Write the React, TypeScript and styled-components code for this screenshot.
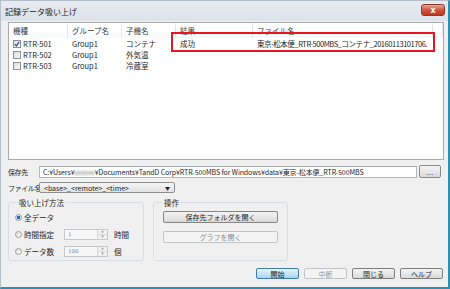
import React from 'react'
import styled, { createGlobalStyle } from 'styled-components'

const GlobalStyle = createGlobalStyle`
  html, body {
    margin: 0;
    padding: 0;
    background: #f0f0f0;
  }
  body {
    font-family: "Noto Sans CJK JP", "Noto Sans", sans-serif;
    font-size: 7.5px;
    color: #1e1e1e;
  }
`

const Window = styled.div`
  width: 450px;
  height: 289px;
  box-sizing: border-box;
  display: flex;
  flex-direction: column;
  background: #f0f0f0;
  border-left: 1px solid #b4bec8;
  border-top: 1px solid #b4bec8;
  border-right: 2px solid #2a8fb3;
  border-bottom: 2px solid #2a8fb3;
  overflow: hidden;
`

const TitleBar = styled.div`
  height: 20px;
  flex: none;
  display: flex;
  align-items: center;
  padding-left: 4px;
  background: linear-gradient(#e6ebf0, #dce3ea);
  font-size: 8px;
  color: #1a1a1a;
`

const CloseButton = styled.div`
  margin-left: auto;
  margin-right: 3px;
  margin-top: -2px;
  width: 24px;
  height: 12px;
  border: 1px solid #8b3a2e;
  border-radius: 3px;
  box-sizing: border-box;
  background: linear-gradient(#e9a99a, #d0533c 50%, #c2361e);
  display: flex;
  align-items: center;
  justify-content: center;
  color: #fff;
  font-family: "DejaVu Sans", sans-serif;
  font-size: 8px;
  font-weight: bold;
`

const Body = styled.div`
  flex: 1;
  display: flex;
  flex-direction: column;
  padding: 1px 4px 0 7px;
`

const ListBox = styled.div`
  position: relative;
  height: 138px;
  box-sizing: border-box;
  border: 1px solid #a9a9a9;
  background: #fff;
`

const HeaderRow = styled.div`
  display: flex;
  height: 15px;
`

const HeaderCell = styled.div<{ $w?: number }>`
  ${(p) => (p.$w ? `width: ${p.$w}px;` : 'flex: 1;')}
  flex-shrink: 0;
  box-sizing: border-box;
  border-right: 1px solid #e3e6ea;
  padding-left: 4px;
  display: flex;
  align-items: center;
  color: #3b3b3b;
  background: linear-gradient(#ffffff, #fafbfc);
`

const Row = styled.div`
  display: flex;
  height: 11px;
`

const Cell = styled.div<{ $w: number; $tight?: boolean }>`
  width: ${(p) => p.$w}px;
  flex-shrink: 0;
  box-sizing: border-box;
  padding-left: 4px;
  display: flex;
  align-items: center;
  gap: 2px;
  white-space: nowrap;
  overflow: hidden;
  letter-spacing: ${(p) => (p.$tight ? '-0.45px' : '0')};
`

const CheckBox = styled.span`
  width: 8px;
  height: 8px;
  box-sizing: border-box;
  border: 1px solid #8f8f8f;
  background: linear-gradient(135deg, #dcdcdc, #fbfbfb);
  display: inline-flex;
  align-items: center;
  justify-content: center;
  flex: none;
`

const Highlight = styled.div`
  position: absolute;
  left: 162px;
  top: 9px;
  width: 264px;
  height: 20px;
  box-sizing: border-box;
  border: 2px solid #e5161d;
`

const FieldRow = styled.div<{ $top: number; $h: number }>`
  display: flex;
  align-items: center;
  margin-top: ${(p) => p.$top}px;
  height: ${(p) => p.$h}px;
`

const FieldLabel = styled.div`
  width: 31px;
  flex: none;
  white-space: nowrap;
  font-size: 7px;
  letter-spacing: -0.4px;
  color: #1e1e1e;
`

const PathInput = styled.div`
  flex: 1;
  height: 12px;
  box-sizing: border-box;
  border: 1px solid #b5b9bd;
  border-top-color: #a4a8ac;
  background: #fff;
  padding-left: 3px;
  display: flex;
  align-items: center;
  white-space: nowrap;
  overflow: hidden;
  font-size: 7px;
  letter-spacing: -0.1px;
`

const Blur = styled.span`
  filter: blur(1px);
  color: #777;
`

const SmallButton = styled.div`
  width: 22px;
  height: 13px;
  margin-left: 2px;
  margin-right: 3px;
  box-sizing: border-box;
  border: 1px solid #8a8a8a;
  border-radius: 2px;
  background: linear-gradient(#f4f4f4, #e7e7e7 50%, #d9d9d9);
  display: flex;
  align-items: center;
  justify-content: center;
  font-size: 7px;
  color: #333;
  letter-spacing: 0.5px;
`

const Select = styled.div`
  width: 136px;
  height: 11px;
  box-sizing: border-box;
  border: 1px solid #8e8f8f;
  border-radius: 2px;
  background: linear-gradient(#f5f5f5, #e3e3e3);
  display: flex;
  align-items: center;
  padding-left: 4px;
  font-size: 7px;
`

const Arrow = styled.span`
  margin-left: auto;
  margin-right: 4px;
  font-size: 5px;
  color: #222;
`

const GroupRow = styled.div`
  display: flex;
  gap: 9px;
  margin-top: 5px;
`

const GroupBox = styled.fieldset<{ $w: number }>`
  width: ${(p) => p.$w}px;
  height: 63px;
  box-sizing: border-box;
  margin: 0;
  padding: 0 6px;
  border: 1px solid #d8dfe4;
  border-radius: 3px;
  display: flex;
  flex-direction: column;
  gap: 5px;

  legend {
    padding: 0 1px;
    margin-left: 3px;
    line-height: 9px;
    font-size: 7.5px;
  }
`

const OptionRow = styled.div<{ $first?: boolean }>`
  display: flex;
  align-items: center;
  height: 12px;
  margin-top: ${(p) => (p.$first ? 4 : 0)}px;
`

const RadioLabel = styled.label`
  width: 49px;
  flex: none;
  display: flex;
  align-items: center;
  gap: 2px;
`

const Radio = styled.span<{ $on?: boolean }>`
  width: 7px;
  height: 7px;
  box-sizing: border-box;
  border-radius: 50%;
  border: 1px solid #9a9a9a;
  background: ${(p) =>
    p.$on ? 'radial-gradient(circle, #2a6bd0 0 1.6px, #cfe3f7 2px)' : 'linear-gradient(135deg, #dddddd, #f9f9f9)'};
  flex: none;
`

const Spinner = styled.div`
  width: 44px;
  height: 11px;
  box-sizing: border-box;
  border: 1px solid #c6c9cc;
  background: #f7f7f7;
  display: flex;
`

const SpinText = styled.div`
  flex: 1;
  padding-left: 3px;
  display: flex;
  align-items: center;
  color: #8a8a8a;
  font-family: "Liberation Serif", serif;
  font-size: 7px;
`

const SpinButtons = styled.div`
  width: 9px;
  display: flex;
  flex-direction: column;
  border-left: 1px solid #d6d6d6;

  span {
    flex: 1;
    display: flex;
    align-items: center;
    justify-content: center;
    font-size: 3px;
    color: #aaa;
    background: #f2f2f2;
  }
  span + span {
    border-top: 1px solid #dcdcdc;
  }
`

const Unit = styled.span`
  margin-left: 6px;
`

const ActionButton = styled.div<{ $disabled?: boolean; $first?: boolean }>`
  margin-left: 3px;
  margin-top: ${(p) => (p.$first ? 4 : 3)}px;
  width: 115px;
  height: 12px;
  box-sizing: border-box;
  border: 1px solid ${(p) => (p.$disabled ? '#c0c4c7' : '#858585')};
  border-radius: 2px;
  background: ${(p) => (p.$disabled ? '#f4f4f4' : 'linear-gradient(#f3f3f3, #e8e8e8 50%, #d8d8d8)')};
  color: ${(p) => (p.$disabled ? '#8d8d8d' : '#1e1e1e')};
  display: flex;
  align-items: center;
  justify-content: center;
  font-size: 7px;
`

const ButtonBar = styled.div`
  display: flex;
  justify-content: flex-end;
  gap: 5px;
  margin-top: 7px;
  padding-right: 1px;
`

const DialogButton = styled.div<{ $variant?: 'default' | 'disabled' }>`
  width: 43px;
  height: 11px;
  box-sizing: border-box;
  border-radius: 2px;
  display: flex;
  align-items: center;
  justify-content: center;
  font-size: 7px;
  border: 1px solid
    ${(p) => (p.$variant === 'default' ? '#3d7bad' : p.$variant === 'disabled' ? '#c3c6c9' : '#7d7d7d')};
  background: ${(p) =>
    p.$variant === 'default'
      ? 'linear-gradient(#e8f5fc, #c6e4f7 50%, #a9d5f2)'
      : p.$variant === 'disabled'
        ? '#f4f4f4'
        : 'linear-gradient(#f3f3f3, #e8e8e8 50%, #d8d8d8)'};
  color: ${(p) => (p.$variant === 'disabled' ? '#9a9a9a' : '#1e1e1e')};
`

const columns = [59, 54, 54, 77, 180]

const rows = [
  { on: true, name: 'RTR-501', group: 'Group1', child: 'コンテナ', result: '成功', file: '東京-松本便_RTR-500MBS_コンテナ_20160113101706.' },
  { on: false, name: 'RTR-502', group: 'Group1', child: '外気温', result: '', file: '' },
  { on: false, name: 'RTR-503', group: 'Group1', child: '冷蔵室', result: '', file: '' },
]

function Check() {
  return (
    <svg width="6" height="6" viewBox="0 0 6 6">
      <path d="M0.8 3.1 L2.4 4.8 L5.3 0.9" fill="none" stroke="#1f3f7a" strokeWidth="1.1" />
    </svg>
  )
}

export default function App() {
  return (
    <>
      <GlobalStyle />
      <Window>
        <TitleBar>
          記録データ吸い上げ
          <CloseButton>x</CloseButton>
        </TitleBar>
        <Body>
          <ListBox>
            <HeaderRow>
              <HeaderCell $w={columns[0]}>機種</HeaderCell>
              <HeaderCell $w={columns[1]}>グループ名</HeaderCell>
              <HeaderCell $w={columns[2]}>子機名</HeaderCell>
              <HeaderCell $w={columns[3]}>結果</HeaderCell>
              <HeaderCell $w={columns[4]}>ファイル名</HeaderCell>
              <HeaderCell />
            </HeaderRow>
            {rows.map((r) => (
              <Row key={r.name}>
                <Cell $w={columns[0]}>
                  <CheckBox>{r.on && <Check />}</CheckBox>
                  {r.name}
                </Cell>
                <Cell $w={columns[1]}>{r.group}</Cell>
                <Cell $w={columns[2]}>{r.child}</Cell>
                <Cell $w={columns[3]}>{r.result}</Cell>
                <Cell $w={columns[4]} $tight>
                  {r.file}
                </Cell>
              </Row>
            ))}
            <Highlight />
          </ListBox>

          <FieldRow $top={5} $h={13}>
            <FieldLabel>保存先</FieldLabel>
            <PathInput>
              C:¥Users¥<Blur>xxxxxx</Blur>¥Documents¥TandD Corp¥RTR-500MBS for Windows¥data¥東京-松本便_RTR-500MBS
            </PathInput>
            <SmallButton>...</SmallButton>
          </FieldRow>

          <FieldRow $top={4} $h={11}>
            <FieldLabel>ファイル名</FieldLabel>
            <Select>
              &lt;base&gt;_&lt;remote&gt;_&lt;time&gt;
              <Arrow>▼</Arrow>
            </Select>
          </FieldRow>

          <GroupRow>
            <GroupBox $w={136}>
              <legend>吸い上げ方法</legend>
              <OptionRow $first>
                <RadioLabel>
                  <Radio $on />
                  全データ
                </RadioLabel>
              </OptionRow>
              <OptionRow>
                <RadioLabel>
                  <Radio />
                  時間指定
                </RadioLabel>
                <Spinner>
                  <SpinText>1</SpinText>
                  <SpinButtons>
                    <span>▲</span>
                    <span>▼</span>
                  </SpinButtons>
                </Spinner>
                <Unit>時間</Unit>
              </OptionRow>
              <OptionRow>
                <RadioLabel>
                  <Radio />
                  データ数
                </RadioLabel>
                <Spinner>
                  <SpinText>100</SpinText>
                  <SpinButtons>
                    <span>▲</span>
                    <span>▼</span>
                  </SpinButtons>
                </Spinner>
                <Unit>個</Unit>
              </OptionRow>
            </GroupBox>
            <GroupBox $w={135}>
              <legend>操作</legend>
              <ActionButton $first>保存先フォルダを開く</ActionButton>
              <ActionButton $disabled>グラフを開く</ActionButton>
            </GroupBox>
          </GroupRow>

          <ButtonBar>
            <DialogButton $variant="default">開始</DialogButton>
            <DialogButton $variant="disabled">中断</DialogButton>
            <DialogButton>閉じる</DialogButton>
            <DialogButton>ヘルプ</DialogButton>
          </ButtonBar>
        </Body>
      </Window>
    </>
  )
}
